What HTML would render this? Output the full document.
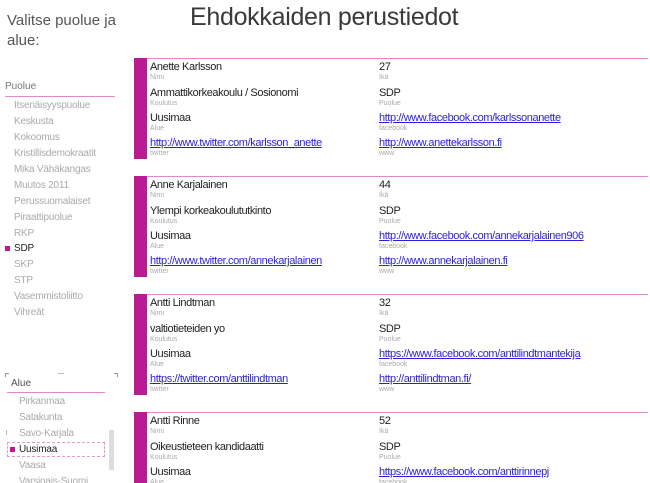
<!DOCTYPE html>
<html><head><meta charset="utf-8"><style>
*{margin:0;padding:0;box-sizing:border-box}
html,body{width:650px;height:483px;overflow:hidden}
body{background:#fff;font-family:"Liberation Sans",sans-serif;position:relative}
.a{position:absolute;white-space:nowrap}
.t{font-size:25px;color:#3a3a3a;left:190px;top:3px;letter-spacing:-0.3px}
.h{font-size:15px;color:#555;left:7px;line-height:20px}
.n{font-size:10px;color:#aaa;left:14px;letter-spacing:-0.2px}
.card{position:absolute;left:134px;width:514px;height:118px}
.card .top{position:absolute;left:0;top:0;width:514px;height:1px;background:#e585cc}
.card .bar{position:absolute;left:0;top:0;width:13px;height:101px;background:#bb1a93}
.v{position:absolute;font-size:11px;color:#222;white-space:nowrap;letter-spacing:-0.4px}
.v.l{color:#2a1ee0;text-decoration:underline}
.lb{position:absolute;font-size:7px;color:#aaa;white-space:nowrap}
</style></head><body>
<div class="a t">Ehdokkaiden perustiedot</div>
<div class="a h" style="top:11px">Valitse puolue ja<br>alue:</div>
<div class="a" style="left:5px;top:81px;font-size:10px;color:#777">Puolue</div>
<div class="a" style="left:5px;top:96px;width:110px;height:1px;background:#e585cc"></div>
<div class="a n" style="top:100px">Itsenäisyyspuolue</div>
<div class="a n" style="top:116px">Keskusta</div>
<div class="a n" style="top:132px">Kokoomus</div>
<div class="a n" style="top:148px">Kristillisdemokraatit</div>
<div class="a n" style="top:164px">Mika Vähäkangas</div>
<div class="a n" style="top:180px">Muutos 2011</div>
<div class="a n" style="top:196px">Perussuomalaiset</div>
<div class="a n" style="top:212px">Piraattipuolue</div>
<div class="a n" style="top:228px">RKP</div>
<div class="a" style="left:5px;top:246px;width:5px;height:5px;background:#bb1a93"></div>
<div class="a n" style="top:243px;color:#222">SDP</div>
<div class="a n" style="top:259px">SKP</div>
<div class="a n" style="top:275px">STP</div>
<div class="a n" style="top:291px">Vasemmistoliitto</div>
<div class="a n" style="top:307px">Vihreät</div>

<div class="a" style="left:5px;top:373px;width:4px;height:4px;border-left:1px solid #999;border-top:1px solid #999"></div>
<div class="a" style="left:114px;top:373px;width:4px;height:4px;border-right:1px solid #999;border-top:1px solid #999"></div>
<div class="a" style="left:58px;top:373px;width:6px;height:1px;background:#bbb"></div>
<div class="a" style="left:11px;top:378px;font-size:10px;color:#555">Alue</div>
<div class="a" style="left:7px;top:392px;width:98px;height:1px;background:#e585cc"></div>
<div class="a n" style="left:19px;top:396px">Pirkanmaa</div>
<div class="a n" style="left:19px;top:412px">Satakunta</div>
<div class="a n" style="left:19px;top:428px">Savo-Karjala</div>
<div class="a" style="left:7px;top:442px;width:98px;height:15px;border:1px dashed #e59ad3"></div>
<div class="a" style="left:10px;top:447px;width:5px;height:5px;background:#bb1a93"></div>
<div class="a n" style="left:19px;top:444px;color:#222">Uusimaa</div>
<div class="a n" style="left:19px;top:460px">Vaasa</div>
<div class="a n" style="left:19px;top:476px">Varsinais-Suomi</div>
<div class="a" style="left:109px;top:430px;width:5px;height:40px;background:#ddd"></div>
<div class="a" style="left:6px;top:430px;width:1px;height:5px;background:#bbb"></div>

<div class="card" style="top:58px"><div class="top"></div><div class="bar"></div>
<div class="v" style="left:16px;top:3px">Anette Karlsson</div><div class="lb" style="left:16px;top:16px">Nimi</div>
<div class="v" style="left:16px;top:29px">Ammattikorkeakoulu / Sosionomi</div><div class="lb" style="left:16px;top:42px">Koulutus</div>
<div class="v" style="left:16px;top:54px">Uusimaa</div><div class="lb" style="left:16px;top:67px">Alue</div>
<div class="v l" style="left:16px;top:79px">http://www.twitter.com/karlsson_anette</div><div class="lb" style="left:16px;top:92px">twitter</div>
<div class="v" style="left:245px;top:3px">27</div><div class="lb" style="left:245px;top:16px">Ikä</div>
<div class="v" style="left:245px;top:29px">SDP</div><div class="lb" style="left:245px;top:42px">Puolue</div>
<div class="v l" style="left:245px;top:54px">http://www.facebook.com/karlssonanette</div><div class="lb" style="left:245px;top:67px">facebook</div>
<div class="v l" style="left:245px;top:79px">http://www.anettekarlsson.fi</div><div class="lb" style="left:245px;top:92px">www</div>
</div>

<div class="card" style="top:176px"><div class="top"></div><div class="bar"></div>
<div class="v" style="left:16px;top:3px">Anne Karjalainen</div><div class="lb" style="left:16px;top:16px">Nimi</div>
<div class="v" style="left:16px;top:29px">Ylempi korkeakoulututkinto</div><div class="lb" style="left:16px;top:42px">Koulutus</div>
<div class="v" style="left:16px;top:54px">Uusimaa</div><div class="lb" style="left:16px;top:67px">Alue</div>
<div class="v l" style="left:16px;top:79px">http://www.twitter.com/annekarjalainen</div><div class="lb" style="left:16px;top:92px">twitter</div>
<div class="v" style="left:245px;top:3px">44</div><div class="lb" style="left:245px;top:16px">Ikä</div>
<div class="v" style="left:245px;top:29px">SDP</div><div class="lb" style="left:245px;top:42px">Puolue</div>
<div class="v l" style="left:245px;top:54px">http://www.facebook.com/annekarjalainen906</div><div class="lb" style="left:245px;top:67px">facebook</div>
<div class="v l" style="left:245px;top:79px">http://www.annekarjalainen.fi</div><div class="lb" style="left:245px;top:92px">www</div>
</div>

<div class="card" style="top:294px"><div class="top"></div><div class="bar"></div>
<div class="v" style="left:16px;top:3px">Antti Lindtman</div><div class="lb" style="left:16px;top:16px">Nimi</div>
<div class="v" style="left:16px;top:29px">valtiotieteiden yo</div><div class="lb" style="left:16px;top:42px">Koulutus</div>
<div class="v" style="left:16px;top:54px">Uusimaa</div><div class="lb" style="left:16px;top:67px">Alue</div>
<div class="v l" style="left:16px;top:79px">https://twitter.com/anttilindtman</div><div class="lb" style="left:16px;top:92px">twitter</div>
<div class="v" style="left:245px;top:3px">32</div><div class="lb" style="left:245px;top:16px">Ikä</div>
<div class="v" style="left:245px;top:29px">SDP</div><div class="lb" style="left:245px;top:42px">Puolue</div>
<div class="v l" style="left:245px;top:54px">https://www.facebook.com/anttilindtmantekija</div><div class="lb" style="left:245px;top:67px">facebook</div>
<div class="v l" style="left:245px;top:79px">http://anttilindtman.fi/</div><div class="lb" style="left:245px;top:92px">www</div>
</div>

<div class="card" style="top:412px;height:71px;overflow:hidden"><div class="top"></div><div class="bar"></div>
<div class="v" style="left:16px;top:3px">Antti Rinne</div><div class="lb" style="left:16px;top:16px">Nimi</div>
<div class="v" style="left:16px;top:29px">Oikeustieteen kandidaatti</div><div class="lb" style="left:16px;top:42px">Koulutus</div>
<div class="v" style="left:16px;top:54px">Uusimaa</div><div class="lb" style="left:16px;top:67px">Alue</div>
<div class="v" style="left:245px;top:3px">52</div><div class="lb" style="left:245px;top:16px">Ikä</div>
<div class="v" style="left:245px;top:29px">SDP</div><div class="lb" style="left:245px;top:42px">Puolue</div>
<div class="v l" style="left:245px;top:54px">https://www.facebook.com/anttirinnepj</div><div class="lb" style="left:245px;top:67px">facebook</div>
</div>
</body></html>
